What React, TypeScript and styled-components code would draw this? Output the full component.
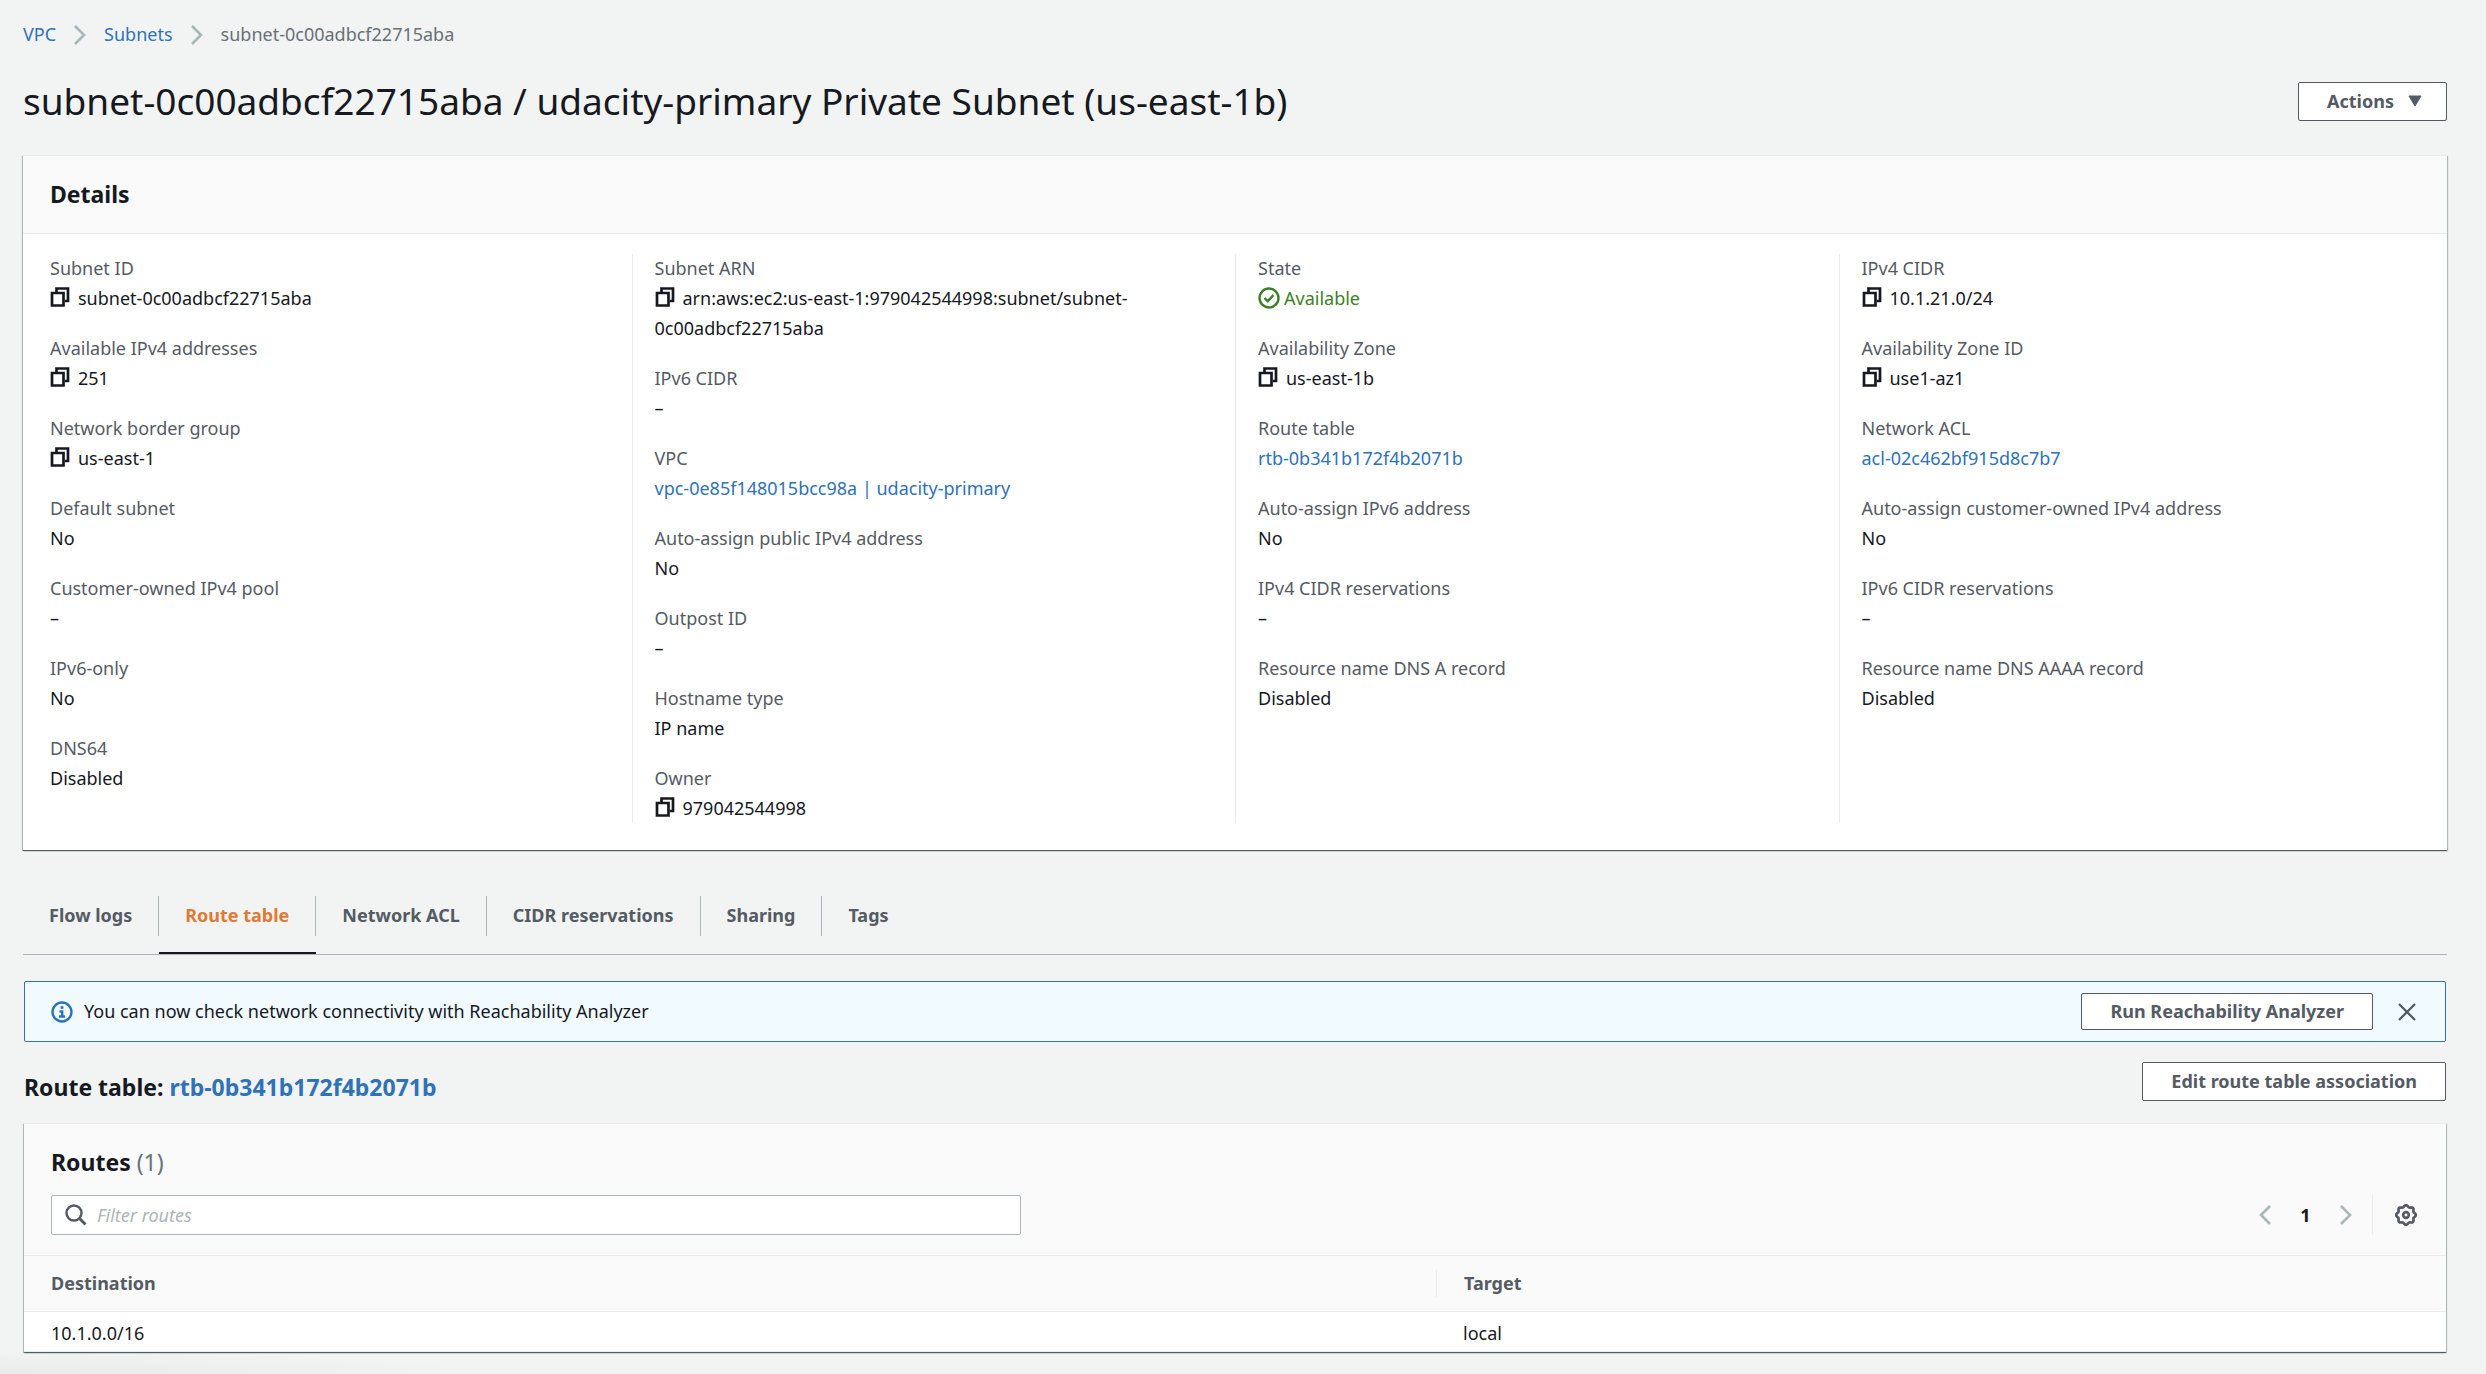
import React from "react";
import styled, { createGlobalStyle } from "styled-components";

const FONT = `"Noto Sans", "Open Sans", sans-serif`;

const c = {
  page: "#f2f3f3",
  ink: "#16191f",
  label: "#545b64",
  muted: "#687078",
  link: "#2e72b8",
  line: "#eaeded",
  edge: "#aab7b8",
  panel: "#fafafa",
  green: "#3c8025",
  orange: "#e07a34",
};

const GlobalStyle = createGlobalStyle`
  *, *::before, *::after { box-sizing: border-box; }
  body {
    margin: 0;
    background: ${c.page};
    color: ${c.ink};
    font: 400 18px/29px ${FONT};
  }
  a { color: ${c.link}; text-decoration: none; }
  a:hover { text-decoration: underline; }
  h1, h2, h3, p, dl, dd, ol, ul { margin: 0; padding: 0; font: inherit; }
  button, input { font: inherit; color: inherit; }
  svg { display: block; flex: none; }
`;

const Page = styled.main`
  display: flex;
  flex-direction: column;
  min-height: 100vh;
  padding: 20px 39px 20px 23px;
  background: radial-gradient(ellipse 500px 22px at 0 100%, #e9ebeb, ${c.page}) no-repeat left bottom / 560px 22px;
`;

const Crumbs = styled.ol`
  display: flex;
  align-items: center;
  list-style: none;
`;

const Crumb = styled.li<{ $current?: boolean }>`
  display: flex;
  align-items: center;
  color: ${(p) => (p.$current ? c.muted : c.link)};
  svg { margin: 0 18px; }
`;

const TitleRow = styled.header`
  display: flex;
  align-items: center;
  justify-content: space-between;
  margin: 28px 0 30px;
`;

const Title = styled.h1`
  font-size: 37px;
  line-height: 48px;
`;

const Button = styled.button<{ $compact?: boolean }>`
  display: flex;
  align-items: center;
  gap: 14px;
  height: ${(p) => (p.$compact ? 37 : 39)}px;
  padding: 0 28px;
  border: 1px solid ${c.label};
  border-radius: 2px;
  background: #fff;
  color: ${c.label};
  font-weight: 700;
  white-space: nowrap;
  cursor: pointer;
`;

const MenuButton = styled(Button)`
  padding-right: 24px;
`;

const IconButton = styled.button`
  display: flex;
  padding: 0;
  border: 0;
  background: none;
  color: ${c.label};
  cursor: pointer;
  &:disabled { color: ${c.edge}; cursor: default; }
`;

const CopyButton = styled(IconButton)`
  display: inline-flex;
  margin-right: 8px;
  vertical-align: -2px;
  color: ${c.ink};
`;

const Card = styled.section`
  background: #fff;
  border-top: 1px solid ${c.line};
  box-shadow: 0 1px 1px 0 rgba(0, 28, 36, 0.5), 1px 1px 1px 0 rgba(0, 28, 36, 0.2),
    -1px 1px 1px 0 rgba(0, 28, 36, 0.2);
`;

const CardHeader = styled.div`
  padding: 24px 27px;
  background: ${c.panel};
  border-bottom: 1px solid ${c.line};
`;

const Heading = styled.h2`
  font-size: 23px;
  font-weight: 700;
  line-height: 29px;
`;

const Count = styled.span`
  color: ${c.muted};
  font-weight: 400;
`;

const Columns = styled.div`
  display: grid;
  grid-template-columns: repeat(4, 1fr);
  padding: 20px 5px 27px;
`;

const Column = styled.dl`
  display: flex;
  flex-direction: column;
  gap: 21px;
  min-width: 0;
  padding: 0 22px;
  & + & { border-left: 1px solid ${c.line}; }
`;

const Term = styled.dt`
  color: ${c.label};
`;

const Value = styled.dd`
  line-height: 30px;
`;

const Status = styled.span`
  display: flex;
  align-items: center;
  gap: 4px;
  color: ${c.green};
`;

const Tabs = styled.div`
  display: flex;
  margin-top: 46px;
  border-bottom: 1px solid ${c.edge};
`;

const Tab = styled.button<{ $active?: boolean }>`
  display: flex;
  padding: 0 0 16px;
  border: 0;
  border-bottom: 2px solid ${(p) => (p.$active ? c.ink : "transparent")};
  background: none;
  color: ${(p) => (p.$active ? c.orange : c.label)};
  font-weight: 700;
  cursor: pointer;
`;

const TabLabel = styled.span<{ $last?: boolean }>`
  padding: 5px 26px 6px;
  border-right: 1px solid ${(p) => (p.$last ? "transparent" : c.edge)};
`;

const TabPanel = styled.div`
  padding: 26px 1px 0;
`;

const Flash = styled.div`
  display: flex;
  align-items: center;
  height: 61px;
  padding: 0 29px 0 26px;
  background: #f1faff;
  border: 1px solid ${c.link};
  border-radius: 2px;
`;

const FlashText = styled.p`
  flex: 1;
  margin-left: 11px;
`;

const CloseSlot = styled.div`
  margin-left: 25px;
`;

const SubHeader = styled.div`
  display: flex;
  justify-content: space-between;
  align-items: flex-start;
  margin: 20px 0 22px;
`;

const SubHeading = styled(Heading)`
  padding-top: 12px;
  line-height: 27px;
`;

const TableTools = styled.div`
  padding: 24px 29px 20px 27px;
  background: ${c.panel};
  border-bottom: 1px solid ${c.line};
`;

const ToolRow = styled.div`
  display: flex;
  align-items: center;
  justify-content: space-between;
  margin-top: 18px;
`;

const Search = styled.label`
  display: flex;
  align-items: center;
  gap: 10px;
  width: 41%;
  height: 40px;
  padding: 0 13px;
  background: #fff;
  border: 1px solid ${c.edge};
  border-radius: 2px;
  color: ${c.label};
`;

const SearchInput = styled.input`
  flex: 1;
  min-width: 0;
  padding: 0;
  border: 0;
  outline: 0;
  background: none;
  color: ${c.ink};
  &::placeholder { color: ${c.edge}; font-style: italic; opacity: 1; }
`;

const Pager = styled.nav`
  display: flex;
  align-items: center;
  height: 40px;
`;

const PageNumber = styled.button`
  width: 69px;
  padding: 0;
  border: 0;
  background: none;
  color: ${c.ink};
  font-weight: 700;
  text-align: center;
`;

const Settings = styled.div`
  display: flex;
  align-items: center;
  height: 40px;
  margin-left: 20px;
  padding-left: 22px;
  border-left: 1px solid ${c.line};
`;

const Table = styled.table`
  width: 100%;
  border-collapse: separate;
  border-spacing: 0;
  table-layout: fixed;
`;

const Th = styled.th`
  height: 56px;
  padding: 0;
  background: ${c.panel};
  border-bottom: 1px solid ${c.line};
  color: ${c.label};
  font-weight: 700;
  line-height: 27px;
  text-align: left;
  &:first-child { width: 58.3%; }
`;

const ThLabel = styled.div`
  padding-left: 27px;
  th + th > & { border-left: 1px solid ${c.line}; }
`;

const Td = styled.td`
  height: 40px;
  padding: 3px 27px 0;
  border-bottom: 1px solid ${c.line};
`;

const Chevron = ({ left }: { left?: boolean }) => (
  <svg width="12" height="20" viewBox="0 0 12 20" fill="none" stroke={c.edge} strokeWidth="2.6">
    <path d={left ? "M11 1 2 10l9 9" : "M1 1l9 9-9 9"} />
  </svg>
);

const CopyIcon = () => (
  <svg width="20" height="20" viewBox="0 0 20 20" fill="none" stroke="currentColor" strokeWidth="2.7">
    <path d="M6.500 6V1.500h11.500v12.500H15" />
    <path d="M2 6h11.500v12.500H2z" />
  </svg>
);

const CheckIcon = () => (
  <svg width="22" height="22" viewBox="0 0 22 22" fill="none" stroke="currentColor" strokeWidth="2.4">
    <circle cx="11" cy="11" r="9.500" />
    <path d="M6.500 11l3.200 3.200 5.800-6" />
  </svg>
);

const InfoIcon = () => (
  <svg width="22" height="22" viewBox="0 0 22 22" fill="none" stroke={c.link} strokeWidth="2.4">
    <circle cx="11" cy="11" r="9.500" />
    <path d="M8.500 10.500h2.700v5M8 15.500h6" />
    <path d="M9.600 6.500h2.800" strokeWidth="2.700" />
  </svg>
);

const SearchIcon = () => (
  <svg width="22" height="22" viewBox="0 0 22 22" fill="none" stroke="currentColor" strokeWidth="2.4">
    <circle cx="9" cy="9" r="7.500" />
    <path d="M14.300 14.300l6.200 6.200" strokeWidth="3" />
  </svg>
);

const CloseIcon = () => (
  <svg width="18" height="18" viewBox="0 0 18 18" fill="none" stroke="currentColor" strokeWidth="2.3">
    <path d="M1 1l16 16M17 1 1 17" />
  </svg>
);

const CaretIcon = () => (
  <svg width="14" height="12" viewBox="0 0 14 12" fill="currentColor" stroke="currentColor" strokeLinejoin="round">
    <path d="M1 1h12L7 11z" />
  </svg>
);

const GEAR = Array.from({ length: 64 }, (_, i) => {
  const a = (i / 64) * Math.PI * 2;
  const r = 9 + 0.9 * Math.cos(a * 8);
  return `${(11 + r * Math.cos(a)).toFixed(2)},${(11 + r * Math.sin(a)).toFixed(2)}`;
}).join(" ");

const GearIcon = () => (
  <svg width="22" height="22" viewBox="0 0 22 22" fill="none" stroke="currentColor" strokeWidth="2.7">
    <polygon points={GEAR} strokeLinejoin="round" />
    <circle cx="11" cy="11" r="2.800" />
  </svg>
);

type Field = { label: string; value: React.ReactNode; copy?: boolean };

const columns: Field[][] = [
  [
    { label: "Subnet ID", value: "subnet-0c00adbcf22715aba", copy: true },
    { label: "Available IPv4 addresses", value: "251", copy: true },
    { label: "Network border group", value: "us-east-1", copy: true },
    { label: "Default subnet", value: "No" },
    { label: "Customer-owned IPv4 pool", value: "–" },
    { label: "IPv6-only", value: "No" },
    { label: "DNS64", value: "Disabled" },
  ],
  [
    {
      label: "Subnet ARN",
      value: (
        <>
          arn:aws:ec2:us-east-1:979042544998:subnet/subnet-
          <wbr />
          0c00adbcf22715aba
        </>
      ),
      copy: true,
    },
    { label: "IPv6 CIDR", value: "–" },
    { label: "VPC", value: <a href="#vpc">vpc-0e85f148015bcc98a | udacity-primary</a> },
    { label: "Auto-assign public IPv4 address", value: "No" },
    { label: "Outpost ID", value: "–" },
    { label: "Hostname type", value: "IP name" },
    { label: "Owner", value: "979042544998", copy: true },
  ],
  [
    {
      label: "State",
      value: (
        <Status>
          <CheckIcon />
          Available
        </Status>
      ),
    },
    { label: "Availability Zone", value: "us-east-1b", copy: true },
    { label: "Route table", value: <a href="#rtb">rtb-0b341b172f4b2071b</a> },
    { label: "Auto-assign IPv6 address", value: "No" },
    { label: "IPv4 CIDR reservations", value: "–" },
    { label: "Resource name DNS A record", value: "Disabled" },
  ],
  [
    { label: "IPv4 CIDR", value: "10.1.21.0/24", copy: true },
    { label: "Availability Zone ID", value: "use1-az1", copy: true },
    { label: "Network ACL", value: <a href="#acl">acl-02c462bf915d8c7b7</a> },
    { label: "Auto-assign customer-owned IPv4 address", value: "No" },
    { label: "IPv6 CIDR reservations", value: "–" },
    { label: "Resource name DNS AAAA record", value: "Disabled" },
  ],
];

const tabs = ["Flow logs", "Route table", "Network ACL", "CIDR reservations", "Sharing", "Tags"];

export default function App() {
  return (
    <>
      <GlobalStyle />
      <Page>
        <Crumbs>
          <Crumb><a href="#vpc">VPC</a><Chevron /></Crumb>
          <Crumb><a href="#subnets">Subnets</a><Chevron /></Crumb>
          <Crumb $current>subnet-0c00adbcf22715aba</Crumb>
        </Crumbs>

        <TitleRow>
          <Title>subnet-0c00adbcf22715aba / udacity-primary Private Subnet (us-east-1b)</Title>
          <MenuButton>Actions<CaretIcon /></MenuButton>
        </TitleRow>

        <Card>
          <CardHeader><Heading>Details</Heading></CardHeader>
          <Columns>
            {columns.map((fields, i) => (
              <Column key={i}>
                {fields.map((f) => (
                  <div key={f.label}>
                    <Term>{f.label}</Term>
                    <Value>
                      {f.copy && <CopyButton aria-label={`Copy ${f.label}`}><CopyIcon /></CopyButton>}
                      {f.value}
                    </Value>
                  </div>
                ))}
              </Column>
            ))}
          </Columns>
        </Card>

        <Tabs role="tablist">
          {tabs.map((t, i) => (
            <Tab key={t} role="tab" aria-selected={t === "Route table"} $active={t === "Route table"}>
              <TabLabel $last={i === tabs.length - 1}>{t}</TabLabel>
            </Tab>
          ))}
        </Tabs>

        <TabPanel role="tabpanel">
          <Flash>
            <InfoIcon />
            <FlashText>You can now check network connectivity with Reachability Analyzer</FlashText>
            <Button $compact>Run Reachability Analyzer</Button>
            <CloseSlot><IconButton aria-label="Dismiss"><CloseIcon /></IconButton></CloseSlot>
          </Flash>

          <SubHeader>
            <SubHeading>Route table: <a href="#rtb">rtb-0b341b172f4b2071b</a></SubHeading>
            <Button>Edit route table association</Button>
          </SubHeader>

          <Card>
            <TableTools>
              <Heading>Routes <Count>(1)</Count></Heading>
              <ToolRow>
                <Search>
                  <SearchIcon />
                  <SearchInput type="text" placeholder="Filter routes" aria-label="Filter routes" />
                </Search>
                <Pager aria-label="Pagination">
                  <IconButton disabled aria-label="Previous page"><Chevron left /></IconButton>
                  <PageNumber>1</PageNumber>
                  <IconButton disabled aria-label="Next page"><Chevron /></IconButton>
                  <Settings><IconButton aria-label="Preferences"><GearIcon /></IconButton></Settings>
                </Pager>
              </ToolRow>
            </TableTools>
            <Table>
              <thead>
                <tr>
                  <Th scope="col"><ThLabel>Destination</ThLabel></Th>
                  <Th scope="col"><ThLabel>Target</ThLabel></Th>
                </tr>
              </thead>
              <tbody>
                <tr>
                  <Td>10.1.0.0/16</Td>
                  <Td>local</Td>
                </tr>
              </tbody>
            </Table>
          </Card>
        </TabPanel>
      </Page>
    </>
  );
}
